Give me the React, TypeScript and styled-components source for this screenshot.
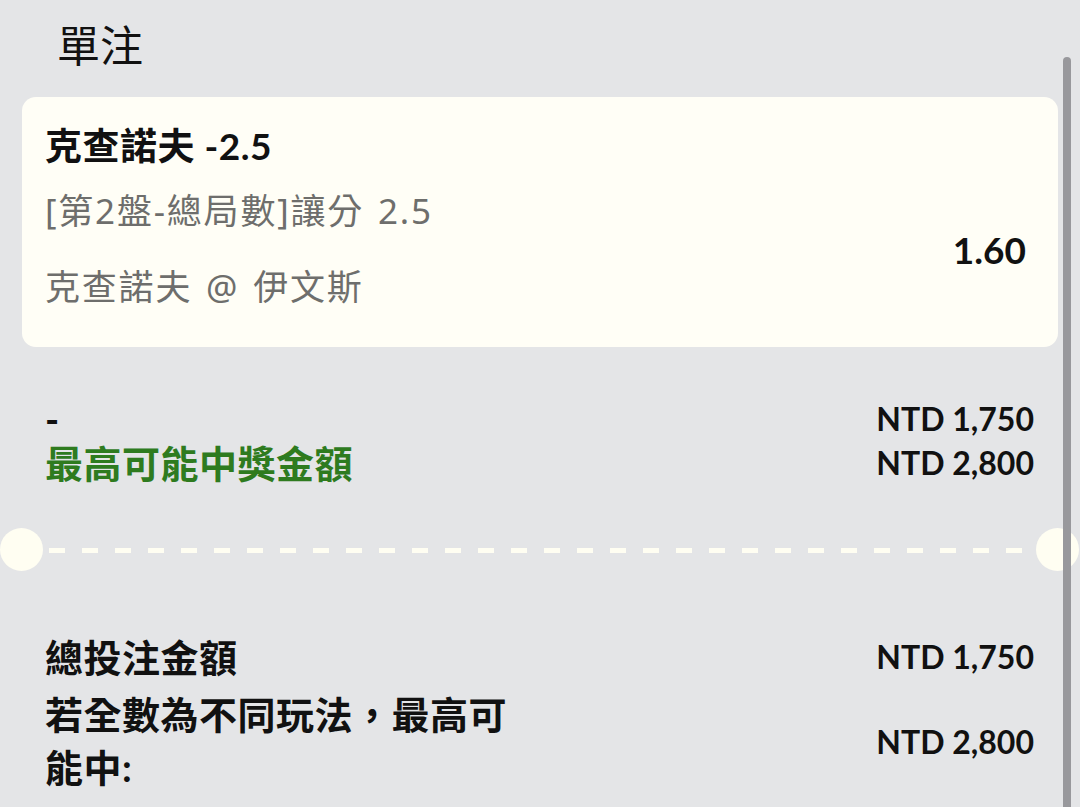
import styled, { createGlobalStyle } from 'styled-components'

const GlobalStyle = createGlobalStyle`
  html, body {
    margin: 0;
    padding: 0;
    background: #e4e5e7;
  }
  body {
    font-family: Lato, 'Noto Sans CJK TC', sans-serif;
    color: #111;
  }
`

const Page = styled.div`
  position: relative;
  width: 1080px;
  height: 807px;
  overflow: hidden;
  background: #e4e5e7;
`

const ScrollThumb = styled.div`
  position: absolute;
  top: 57px;
  right: 9px;
  width: 8px;
  height: 780px;
  border-radius: 4px;
  background: #98989c;
`

const Header = styled.div`
  padding: 18px 0 0 57px;
  font-family: 'Noto Sans CJK TC', sans-serif;
  font-size: 43px;
  line-height: 50px;
  font-weight: 400;
`

const Card = styled.div`
  margin: 29px 22px 0;
  height: 250px;
  box-sizing: border-box;
  padding: 22px 32px 21px 23px;
  border-radius: 14px;
  background: #fffef6;
`

const Title = styled.div`
  font-size: 37px;
  line-height: 54px;
  font-weight: 700;
  letter-spacing: 0.5px;
`

const CardBody = styled.div`
  display: flex;
  align-items: center;
  justify-content: space-between;
`

const Info = styled.div`
  font-family: 'Noto Sans', 'Noto Sans CJK TC', sans-serif;
  font-size: 35px;
  line-height: 76px;
  letter-spacing: 1.8px;
  word-spacing: 3px;
  color: #6e6e6c;
`

const Odds = styled.div`
  font-size: 37px;
  font-weight: 700;
`

const Rows = styled.div<{ $top: number; $gap?: number }>`
  display: flex;
  flex-direction: column;
  gap: ${(p) => p.$gap ?? 0}px;
  margin-top: ${(p) => p.$top}px;
  padding: 0 46px 0 45px;
`

const Row = styled.div`
  display: flex;
  align-items: center;
  justify-content: space-between;
`

const Label = styled.div<{ $green?: boolean; $lh: number }>`
  max-width: 480px;
  font-size: 38px;
  line-height: ${(p) => p.$lh}px;
  font-weight: 700;
  letter-spacing: 0.5px;
  color: ${(p) => (p.$green ? '#2e7b1f' : '#111')};
`

const Amount = styled.div<{ $lh: number }>`
  font-size: 32px;
  line-height: ${(p) => p.$lh}px;
  font-weight: 700;
  white-space: nowrap;
`

const Divider = styled.div`
  display: flex;
  align-items: center;
  margin: 42px 1px 0 0;
  height: 44px;
`

const Notch = styled.div`
  flex: 0 0 43px;
  height: 43px;
  border-radius: 50%;
  background: #fffef2;
`

const Dashes = styled.div`
  flex: 1;
  height: 5px;
  margin: 2px 6px 0;
  background: repeating-linear-gradient(
    to right,
    #fffef2 0 16px,
    transparent 16px 33px
  );
`

export default function App() {
  return (
    <Page>
      <GlobalStyle />
      <Header>單注</Header>
      <Card>
        <Title>克查諾夫 -2.5</Title>
        <CardBody>
          <div>
            <Info>[第2盤-總局數]讓分 2.5</Info>
            <Info>克查諾夫 @ 伊文斯</Info>
          </div>
          <Odds>1.60</Odds>
        </CardBody>
      </Card>
      <Rows $top={50}>
        <Row>
          <Label $lh={44}>-</Label>
          <Amount $lh={44}>NTD 1,750</Amount>
        </Row>
        <Row>
          <Label $lh={44} $green>
            最高可能中獎金額
          </Label>
          <Amount $lh={44}>NTD 2,800</Amount>
        </Row>
      </Rows>
      <Divider>
        <Notch />
        <Dashes />
        <Notch />
      </Divider>
      <Rows $top={61} $gap={6}>
        <Row>
          <Label $lh={50}>總投注金額</Label>
          <Amount $lh={50}>NTD 1,750</Amount>
        </Row>
        <Row>
          <Label $lh={53}>若全數為不同玩法，最高可能中:</Label>
          <Amount $lh={53}>NTD 2,800</Amount>
        </Row>
      </Rows>
      <ScrollThumb />
    </Page>
  )
}
